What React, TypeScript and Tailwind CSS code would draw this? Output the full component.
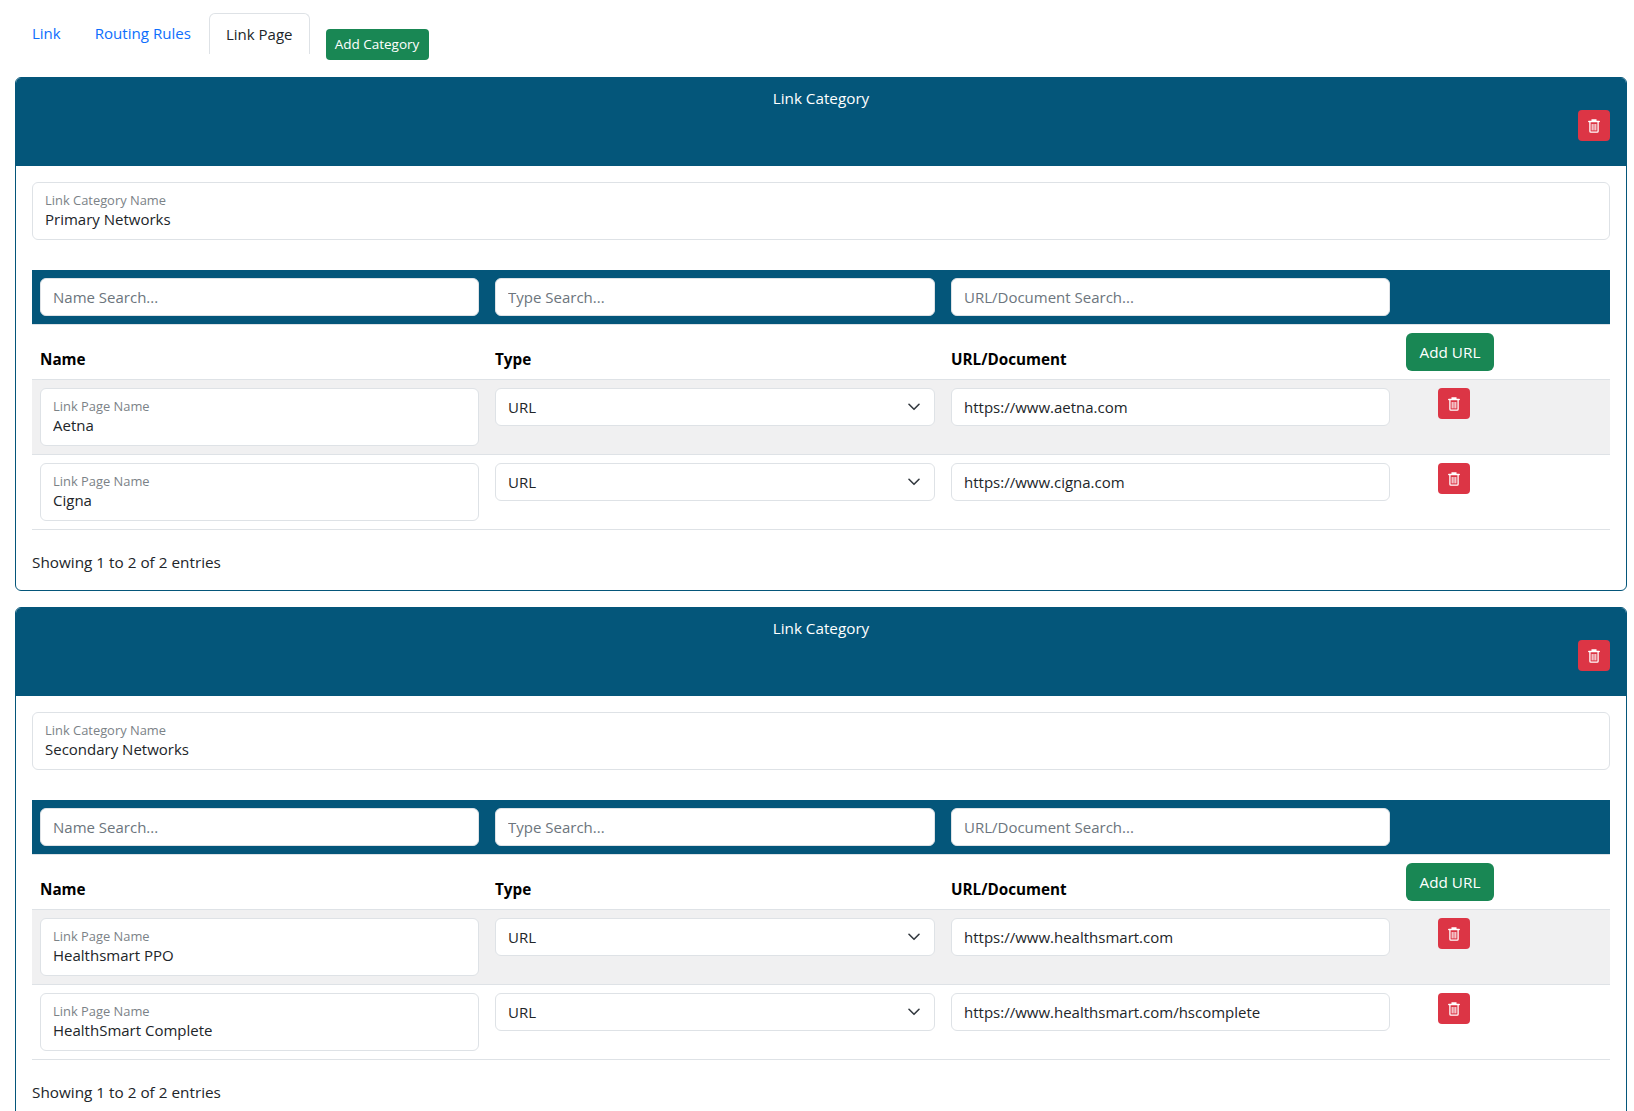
import React from "react";

const font = "font-['Open_Sans','Noto_Sans',sans-serif]";

function TrashIcon() {
  return (
    <svg width="12" height="14" viewBox="0 0 12 14" fill="none" className="block">
      <path d="M4 1h4M.8 2.6h10.4" stroke="#fff" strokeWidth="1.5" strokeLinecap="round" />
      <path d="M1.9 3v9.2c0 .6.4 1 1 1h6.2c.6 0 1-.4 1-1V3" stroke="#fff" strokeWidth="1.3" />
      <path d="M4.2 5v6.4M6 5v6.4M7.8 5v6.4" stroke="#fff" strokeWidth="1" />
    </svg>
  );
}

function DeleteButton({ className = "" }: { className?: string }) {
  return (
    <button
      type="button"
      aria-label="Delete"
      className={`flex h-[31px] w-8 items-center justify-center rounded-[4px] bg-[#dc3545] ${className}`}
    >
      <TrashIcon />
    </button>
  );
}

function FloatingField({ label, value }: { label: string; value: string }) {
  return (
    <div className="flex h-[58px] flex-col rounded-[6px] border border-[#dee2e6] bg-white px-3 pt-2">
      <label className="text-[12.9px] leading-[18px] text-[#7b8287]">{label}</label>
      <input
        readOnly
        value={value}
        className="-mt-[2px] h-6 w-full bg-transparent text-[15px] leading-6 text-[#212529] outline-none"
      />
    </div>
  );
}

function SearchInput({ placeholder }: { placeholder: string }) {
  return (
    <input
      placeholder={placeholder}
      className="h-[38px] w-full rounded-[6px] border border-[#dee2e6] bg-white px-3 text-[15px] text-[#212529] outline-none placeholder:text-[#6c757d]"
    />
  );
}

type Row = { name: string; url: string };

function Category({ title, rows }: { title: string; rows: Row[] }) {
  return (
    <section className="h-[514px] shrink-0 overflow-hidden rounded-[6px] border border-[#04567a] bg-white">
      <div className="flex h-[88px] flex-col bg-[#04567a] px-4 pt-2">
        <div className="text-center text-[15.25px] leading-6 text-white">Link Category</div>
        <DeleteButton className="self-end" />
      </div>
      <div className="p-4">
        <FloatingField label="Link Category Name" value={title} />
        <table className="mt-[30px] w-full table-fixed border-separate border-spacing-0 text-[15px] text-[#212529]">
          <colgroup>
            <col className="w-[455px]" />
            <col className="w-[456px]" />
            <col className="w-[455px]" />
            <col />
          </colgroup>
          <thead>
            <tr className="bg-[#04567a]">
              <td className="border-b border-[#dee2e6] p-2">
                <SearchInput placeholder="Name Search..." />
              </td>
              <td className="border-b border-[#dee2e6] p-2">
                <SearchInput placeholder="Type Search..." />
              </td>
              <td className="border-b border-[#dee2e6] p-2">
                <SearchInput placeholder="URL/Document Search..." />
              </td>
              <td className="border-b border-[#dee2e6] p-2" />
            </tr>
            <tr>
              <th className="border-b border-[#dee2e6] p-2 text-left align-bottom text-[15.25px] leading-6 font-bold text-black">Name</th>
              <th className="border-b border-[#dee2e6] p-2 text-left align-bottom text-[15.25px] leading-6 font-bold text-black">Type</th>
              <th className="border-b border-[#dee2e6] p-2 text-left align-bottom text-[15.25px] leading-6 font-bold text-black">URL/Document</th>
              <th className="border-b border-[#dee2e6] p-2 text-left align-bottom">
                <button type="button" className="h-[38px] w-[88px] rounded-[6px] bg-[#198754] text-[15.25px] font-normal text-white">
                  Add URL
                </button>
              </th>
            </tr>
          </thead>
          <tbody>
            {rows.map((r, i) => (
              <tr key={r.name} className={i % 2 === 0 ? "bg-[#f0f0f1]" : "bg-white"}>
                <td className="border-b border-[#dee2e6] p-2 align-top">
                  <FloatingField label="Link Page Name" value={r.name} />
                </td>
                <td className="border-b border-[#dee2e6] p-2 align-top">
                  <div className="relative">
                    <select className="h-[38px] w-full appearance-none rounded-[6px] border border-[#dee2e6] bg-white px-3 text-[15px] text-[#212529] outline-none">
                      <option>URL</option>
                    </select>
                    <svg width="12" height="8" viewBox="0 0 12 8" fill="none" className="pointer-events-none absolute top-[15px] right-[15px]">
                      <path d="M1 1.3l5 5 5-5" stroke="#343a40" strokeWidth="1.6" strokeLinecap="round" strokeLinejoin="round" />
                    </svg>
                  </div>
                </td>
                <td className="border-b border-[#dee2e6] p-2 align-top">
                  <input
                    readOnly
                    value={r.url}
                    className="h-[38px] w-full rounded-[6px] border border-[#dee2e6] bg-white px-3 text-[15px] text-[#212529] outline-none"
                  />
                </td>
                <td className="border-b border-[#dee2e6] p-2 align-top">
                  <DeleteButton className="ml-8" />
                </td>
              </tr>
            ))}
          </tbody>
        </table>
        <div className="mt-5 text-[15.3px] leading-6 text-[#212529]">Showing 1 to 2 of 2 entries</div>
      </div>
    </section>
  );
}

export default function App() {
  return (
    <div className={`${font} flex h-[1111px] flex-col gap-4 overflow-hidden bg-white pt-[13px] pr-[7px] pl-[15px]`}>
      <nav className="flex h-[48px] shrink-0 items-start pl-px">
        <a className="flex h-[41px] items-center pr-[18px] pl-4 text-[15px] text-[#0d6efd]">Link</a>
        <a className="flex h-[41px] items-center pr-[18px] pl-4 text-[15.1px] text-[#0d6efd]">Routing Rules</a>
        <a className="flex h-[41px] items-center rounded-t-[6px] border-x border-t border-[#dee2e6] px-4 text-[15px] text-[#212529]">
          Link Page
        </a>
        <button
          type="button"
          className="mt-4 ml-4 h-[31px] w-[103px] rounded-[4px] bg-[#198754] text-[13.5px] text-white"
        >
          Add Category
        </button>
      </nav>
      <Category
        title="Primary Networks"
        rows={[
          { name: "Aetna", url: "https://www.aetna.com" },
          { name: "Cigna", url: "https://www.cigna.com" },
        ]}
      />
      <Category
        title="Secondary Networks"
        rows={[
          { name: "Healthsmart PPO", url: "https://www.healthsmart.com" },
          { name: "HealthSmart Complete", url: "https://www.healthsmart.com/hscomplete" },
        ]}
      />
    </div>
  );
}
